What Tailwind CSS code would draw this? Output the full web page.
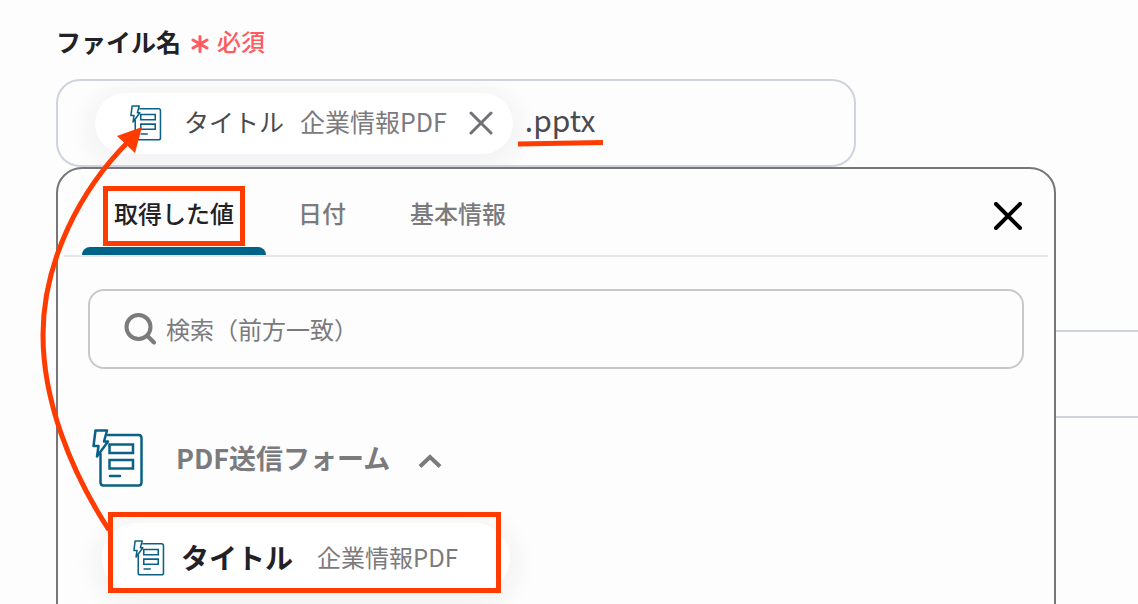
<!DOCTYPE html>
<html lang="ja">
<head>
<meta charset="utf-8">
<meta name="viewport" content="width=device-width, initial-scale=1">
<title>ファイル名</title>
<script src="https://cdn.jsdelivr.net/npm/@tailwindcss/browser@4"></script>
</head>
<body class="bg-[#fdfdfd] font-['Noto_Sans_CJK_JP',sans-serif] text-[#222226]">
<svg class="hidden" aria-hidden="true">
  <symbol id="form-icon" viewBox="0 0 52 60">
    <g fill="none" stroke="currentColor" stroke-linejoin="round" stroke-linecap="round">
      <path d="M16 6H46.500Q49.500 6 49.500 9V53.500Q49.500 56.500 46.500 56.500H11.500Q8.500 56.500 8.500 53.500V25"/>
      <path d="M3.500 1.500H15L12 12.500H16L5 27.500L6.500 17H1.500Z"/>
      <path stroke-linejoin="miter" d="M17.500 15.500H41V24H17.500ZM17.500 31H41V39.500H17.500Z"/>
      <path d="M18 47H28"/>
    </g>
  </symbol>
</svg>

<main class="relative h-screen overflow-hidden pl-14">
  <div class="flex h-[79px] items-center gap-2.5 pt-0.5">
    <label for="filename" class="text-[25px] leading-10 font-bold">ファイル名</label>
    <span class="flex items-center gap-2 text-2xl leading-10 font-medium text-[#ff5a60]">
      <svg class="mt-1.5 size-[18px]" viewBox="0 0 18 18" fill="none" stroke="currentColor" stroke-width="3" stroke-linecap="round" aria-hidden="true"><path d="M9 1.500V16.500M2 5L16 13M16 5L2 13"/></svg>
      必須
    </span>
  </div>

  <div class="mr-[282px] flex h-[88px] items-center overflow-hidden rounded-3xl border-2 border-[#cfd3de] pl-[37px]">
    <div class="flex h-[61px] shrink-0 items-center rounded-full bg-white pr-5 pl-[35px] shadow-[0_6px_24px_8px_rgba(60,40,80,0.05)]">
      <svg class="h-[37px] w-8 stroke-[2.500] text-[#0b6185]" aria-hidden="true"><use href="#form-icon"/></svg>
      <span class="ml-[22px] pb-1 text-[25px] leading-10 text-[#4b4a4e]">タイトル</span>
      <span class="ml-4 pb-1 text-[25px] leading-10 text-[#7b7a7d]">企業情報PDF</span>
      <button type="button" aria-label="削除" class="ml-[22px] text-[#717074]">
        <svg class="size-6" viewBox="0 0 24 24" fill="none" stroke="currentColor" stroke-width="3" stroke-linecap="round" aria-hidden="true"><path d="M2 2L22 22M22 2L2 22"/></svg>
      </button>
    </div>
    <input id="filename" type="text" value=".pptx" class="ml-3 h-12 min-w-0 flex-1 bg-transparent pb-2 text-[30px] text-[#4b4a4e] outline-none">
  </div>

  <div class="mt-[163px] h-[88px] border-2 border-r-0 border-[#cfd3de]"></div>

  <!-- Dropdown panel opened below the file name field -->
  <section class="absolute top-[167px] right-[82px] -bottom-10 left-14 rounded-[26px] border-2 border-[#777679] bg-[#fdfdfd]">
    <div class="mx-1.5 flex h-[88px] items-stretch border-b-2 border-[#e5e5e5] pr-[26px] pl-[18px]">
      <div role="tablist" class="flex flex-1 items-stretch text-2xl font-medium text-[#7b7a7d]">
        <button type="button" role="tab" aria-selected="true" class="flex flex-col px-8 text-[#222226]">
          <span class="flex-1 pt-6 leading-10">取得した値</span>
          <span class="-mx-8 h-2 self-stretch rounded-t-lg bg-[#006287]"></span>
        </button>
        <button type="button" role="tab" aria-selected="false" class="px-8 pt-0.5 leading-10">日付</button>
        <button type="button" role="tab" aria-selected="false" class="px-8 pt-0.5 leading-10">基本情報</button>
      </div>
      <button type="button" aria-label="閉じる" class="pt-2 text-black">
        <svg class="size-7" viewBox="0 0 28 28" fill="none" stroke="currentColor" stroke-width="4" stroke-linecap="round" aria-hidden="true"><path d="M2 2L26 26M26 2L2 26"/></svg>
      </button>
    </div>

    <div class="px-[30px] pt-8">
      <label class="flex h-20 items-center rounded-2xl border-2 border-[#c8c8ca] pr-8 pl-[34px]">
        <svg class="size-8 text-[#7b7a7d]" viewBox="0 0 32 32" fill="none" stroke="currentColor" stroke-width="4" stroke-linecap="round" aria-hidden="true"><circle cx="14.500" cy="14" r="12"/><path d="M23.500 23L30 29.500"/></svg>
        <input type="search" aria-label="検索" placeholder="検索（前方一致）" class="ml-2.5 h-12 min-w-0 flex-1 pb-0.5 text-2xl outline-none placeholder:text-[#7b7a7d]">
      </label>

      <button type="button" aria-expanded="true" class="mt-[60px] flex h-[60px] items-center pl-1 text-[#7b7a7d]">
        <svg class="h-[60px] w-[52px] stroke-[2.500] text-[#0b6185]" aria-hidden="true"><use href="#form-icon"/></svg>
        <span class="ml-8 pb-0.5 text-[27px] leading-10 font-bold">PDF送信フォーム</span>
        <svg class="mt-1 ml-7 h-4 w-6" viewBox="0 0 24 16" fill="none" stroke="currentColor" stroke-width="4" aria-hidden="true"><path d="M2 13.500L12 4L22 13.500"/></svg>
      </button>

      <button type="button" class="mt-[34px] ml-3.5 flex h-[70px] items-center rounded-full bg-white pr-[52px] pl-[31px] shadow-[0_6px_24px_8px_rgba(60,40,80,0.05)]">
        <svg class="h-[37px] w-8 stroke-[2.500] text-[#0b6185]" aria-hidden="true"><use href="#form-icon"/></svg>
        <span class="ml-4 pb-0.5 text-[28px] leading-10 font-bold">タイトル</span>
        <span class="ml-6 pb-0.5 text-2xl leading-10 text-[#7b7a7d]">企業情報PDF</span>
      </button>
    </div>
  </section>

  <!-- Callout marks drawn over the form -->
  <svg class="pointer-events-none absolute top-0 left-0 h-[604px] w-[1138px]" viewBox="0 0 1138 604" fill="none" stroke="#ff3b00" stroke-width="5" aria-hidden="true">
    <rect x="105.500" y="188.500" width="137" height="55"/>
    <rect x="110.500" y="514.500" width="388" height="76"/>
    <path d="M109 530C70 470 43 400 43 335C43 262 80 190 128 142"/>
    <path d="M142 127L117 136L135 153Z" fill="#ff3b00" stroke="none"/>
    <path d="M518 144L603 142.500"/>
  </svg>
</main>
</body>
</html>
